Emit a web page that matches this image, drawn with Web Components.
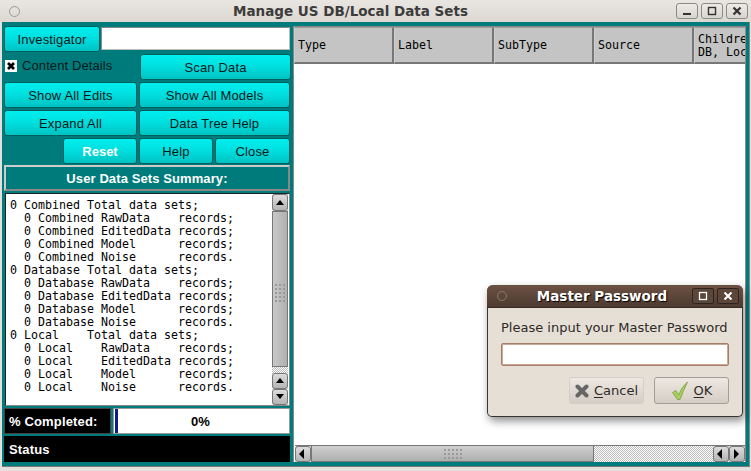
<!DOCTYPE html>
<html>
<head>
<meta charset="utf-8">
<title>Manage US DB/Local Data Sets</title>
<style>
html, body { margin: 0; padding: 0; width: 751px; height: 471px; overflow: hidden; background: #e4e0db; }
</style>
</head>
<body>
<us-main-window></us-main-window>
<script>
// square arrow button used by both scrollbars
class ArrowButton extends HTMLElement {
    constructor() {
        super();
        const dir = this.getAttribute('dir') || 'up';
        const pts = { up: '1,7 9,7 5,2', down: '1,2 9,2 5,7', left: '6,0 6,10 1,5', right: '2,0 2,10 7,5' }[dir];
        const shadow = this.attachShadow({ mode: 'open' });
        shadow.innerHTML = `
            <style>
                :host {
                    display: flex;
                    align-items: center;
                    justify-content: center;
                    box-sizing: border-box;
                    background: linear-gradient(#dcdcdc, #b4b4b4);
                    border: 1px solid #777;
                    border-radius: 3px;
                }
                svg { display: block; }
            </style>
            <svg width="10" height="10" viewBox="0 0 10 10"><polygon points="${pts}" fill="#000"/></svg>
        `;
    }
}
customElements.define('us-arrow', ArrowButton);

class TealButton extends HTMLElement {
    constructor() {
        super();
        const shadow = this.attachShadow({ mode: 'open' });
        shadow.innerHTML = `
            <style>
                :host {
                    display: flex;
                    align-items: center;
                    justify-content: center;
                    box-sizing: border-box;
                    height: 26px;
                    background: linear-gradient(#00eeee 0%, #00e0e0 45%, #00c2c2 100%);
                    border: 1px solid #005f5f;
                    border-radius: 3px;
                    font: 13px "Liberation Sans", sans-serif;
                    letter-spacing: 0.15px;
                    color: #04181a;
                }
                :host([light]) { color: #fff; font-weight: bold; letter-spacing: 0; }
            </style>
            <slot></slot>
        `;
    }
}
customElements.define('us-button', TealButton);

class SummaryBox extends HTMLElement {
    constructor() {
        super();
        const shadow = this.attachShadow({ mode: 'open' });
        shadow.innerHTML = `
            <style>
                :host {
                    display: flex;
                    box-sizing: border-box;
                    height: 213px;
                    flex: none;
                    background: #fff;
                    border: 1px solid #222;
                    border-right-color: #888;
                    border-bottom-color: #888;
                }
                pre {
                    flex: 1;
                    margin: 0;
                    padding: 5px 0 0 4px;
                    font: 11.63px/13px "DejaVu Sans Mono", monospace;
                    color: #000;
                }
                .bar {
                    width: 16px;
                    margin: 0 1px 0 0;
                    display: flex;
                    flex-direction: column;
                    background: repeating-conic-gradient(#bbb 0 25%, #fff 0 50%) 0 0 / 2px 2px;
                }
                us-arrow { height: 17px; }
                .thumb {
                    height: 156px;
                    box-sizing: border-box;
                    background: linear-gradient(90deg, #c8c8c8, #b0b0b0);
                    border: 1px solid #777;
                    display: flex;
                    align-items: center;
                    justify-content: center;
                }
                .grip { display: grid; grid-template-columns: repeat(3, 2px); gap: 2px 2px; margin-top: 8px; }
                .grip i { width: 2px; height: 2px; background: #999; }
                .gap { flex: 1; }
            </style>
            <pre>0 Combined Total data sets;
  0 Combined RawData    records;
  0 Combined EditedData records;
  0 Combined Model      records;
  0 Combined Noise      records.
0 Database Total data sets;
  0 Database RawData    records;
  0 Database EditedData records;
  0 Database Model      records;
  0 Database Noise      records.
0 Local    Total data sets;
  0 Local    RawData    records;
  0 Local    EditedData records;
  0 Local    Model      records;
  0 Local    Noise      records.</pre>
            <div class="bar">
                <us-arrow dir="up"></us-arrow>
                <div class="thumb"><div class="grip">${Array(15).fill('<i></i>').join('')}</div></div>
                <div class="gap"></div>
                <us-arrow dir="up" style="height:16px"></us-arrow>
                <us-arrow dir="down" style="height:16px"></us-arrow>
            </div>
        `;
    }
}
customElements.define('us-summary', SummaryBox);

class LeftPanel extends HTMLElement {
    constructor() {
        super();
        const shadow = this.attachShadow({ mode: 'open' });
        shadow.innerHTML = `
            <style>
                :host {
                    display: flex;
                    flex-direction: column;
                    width: 286px;
                    flex: none;
                }
                .rows { display: flex; flex-direction: column; gap: 2px; }
                .row { display: flex; gap: 2px; height: 26px; }
                .row > * { flex: none; }
                .l { width: 133px; }
                .r { width: 151px; margin-left: auto; }
                .s { width: 74px; }
                .first { gap: 1px; }
                .first us-button { width: 96px; }
                .first div {
                    flex: 1;
                    box-sizing: border-box;
                    height: 23px;
                    margin-top: 1px;
                    background: #fff;
                    border: 1px solid #bbb;
                    border-top-color: #888;
                    border-left-color: #888;
                }
                .check {
                    display: flex;
                    align-items: center;
                    gap: 5px;
                    padding: 0 0 3px 1px;
                    font: 13px "Liberation Sans", sans-serif;
                    letter-spacing: 0.1px;
                    color: #04181a;
                }
                .check svg { display: block; }
                .title {
                    box-sizing: border-box;
                    height: 26px;
                    flex: none;
                    margin-top: 1px;
                    display: flex;
                    align-items: center;
                    justify-content: center;
                    background: #007b7b;
                    border: 2px solid #ccc;
                    border-right-color: #888;
                    border-bottom-color: #888;
                    font: bold 13px "Liberation Sans", sans-serif;
                    letter-spacing: 0.1px;
                    color: #fff;
                }
                us-summary { margin-top: 2px; margin-left: 1px; }
                .progress { display: flex; height: 26px; flex: none; margin-top: 2px; }
                .label {
                    box-sizing: border-box;
                    display: flex;
                    align-items: center;
                    background: #000;
                    color: #fff;
                    font: bold 13px "Liberation Sans", sans-serif;
                    letter-spacing: 0.15px;
                    padding-left: 5px;
                }
                .progress .label { width: 107px; padding-left: 4px; border: 1px solid #444; }
                .meter {
                    flex: 1;
                    margin-left: 2px;
                    box-sizing: border-box;
                    background: #fff;
                    border: 1px solid #999;
                    display: flex;
                    align-items: center;
                    font: bold 13px "Liberation Sans", sans-serif;
                    color: #000;
                }
                .meter b { width: 3px; height: 24px; background: #101a8a; margin-left: 1px; }
                .meter span { flex: 1; text-align: center; padding-right: 6px; }
                .status { height: 26px; flex: none; margin-top: 2px; }
            </style>
            <div class="rows">
                <div class="row first"><us-button>Investigator</us-button><div></div></div>
                <div class="row">
                    <div class="check l">
                        <svg width="12" height="12" viewBox="0 0 12 12"><rect width="12" height="12" fill="#fff"/><path d="M3 3l6 6M9 3l-6 6" stroke="#000" stroke-width="2.8"/></svg>
                        Content Details
                    </div>
                    <us-button class="r">Scan Data</us-button>
                </div>
                <div class="row">
                    <us-button class="l">Show All Edits</us-button>
                    <us-button class="r">Show All Models</us-button>
                </div>
                <div class="row">
                    <us-button class="l">Expand All</us-button>
                    <us-button class="r">Data Tree Help</us-button>
                </div>
                <div class="row" style="justify-content:flex-end">
                    <us-button light class="s">Reset</us-button>
                    <us-button class="s">Help</us-button>
                    <us-button class="s" style="width:75px">Close</us-button>
                </div>
            </div>
            <div class="title">User Data Sets Summary:</div>
            <us-summary></us-summary>
            <div class="progress">
                <div class="label">% Completed:</div>
                <div class="meter"><b></b><span>0%</span></div>
            </div>
            <div class="label status">Status</div>
        `;
    }
}
customElements.define('us-left-panel', LeftPanel);

class DataTree extends HTMLElement {
    constructor() {
        super();
        const shadow = this.attachShadow({ mode: 'open' });
        shadow.innerHTML = `
            <style>
                :host {
                    display: flex;
                    flex-direction: column;
                    flex: 1;
                    box-sizing: border-box;
                    min-width: 0;
                    background: #fff;
                    border-left: 1px solid #888;
                    border-top: 1px solid #888;
                    border-right: 1px solid #888;
                }
                .head { display: flex; height: 37px; flex: none; overflow: hidden; background: #c4c4c4; }
                .head div {
                    box-sizing: border-box;
                    width: 100px;
                    flex: none;
                    display: flex;
                    align-items: center;
                    padding: 1px 0 0 3px;
                    border-style: solid;
                    border-color: #999 #777 #777 #ccc;
                    border-width: 1px 2px 2px 1px;
                    background: #c4c4c4;
                    font: 11.63px/13px "DejaVu Sans Mono", monospace;
                    color: #000;
                    white-space: pre;
                }
                .body { flex: 1; }
                .hbar {
                    display: flex;
                    height: 17px;
                    flex: none;
                    box-sizing: border-box;
                    margin: 0 0 0 1px;
                    background: repeating-conic-gradient(#bbb 0 25%, #fff 0 50%) 0 0 / 2px 2px;
                    border-top: 1px solid #777;
                }
                us-arrow { width: 16px; }
                .thumb {
                    width: 283px;
                    box-sizing: border-box;
                    background: linear-gradient(#d0d0d0, #aeaeae);
                    border: 1px solid #777;
                    border-top: 0;
                    display: flex;
                    align-items: center;
                    justify-content: center;
                }
                .grip { display: grid; grid-template-columns: repeat(5, 2px); gap: 2px 2px; }
                .grip i { width: 2px; height: 2px; background: #999; }
                .gap { flex: 1; }
            </style>
            <div class="head">
                <div>Type</div><div>Label</div><div>SubType</div><div>Source</div><div>Children
DB, Local</div>
            </div>
            <div class="body"></div>
            <div class="hbar">
                <us-arrow dir="left"></us-arrow>
                <div class="thumb"><div class="grip">${Array(15).fill('<i></i>').join('')}</div></div>
                <div class="gap"></div>
                <us-arrow dir="left"></us-arrow>
                <us-arrow dir="right"></us-arrow>
            </div>
        `;
    }
}
customElements.define('us-data-tree', DataTree);

class TitleBar extends HTMLElement {
    constructor() {
        super();
        const shadow = this.attachShadow({ mode: 'open' });
        shadow.innerHTML = `
            <style>
                :host {
                    display: flex;
                    align-items: center;
                    box-sizing: border-box;
                    height: 22px;
                    padding: 0 3px 0 9px;
                    background: linear-gradient(#e9e6e1, #dcd7d1);
                    font: bold 13.5px "DejaVu Sans", sans-serif;
                    color: #3c3c3c;
                    flex: none;
                }
                .dot { width: 9px; height: 9px; border: 1px solid #999; border-radius: 50%; }
                .text { flex: 1; text-align: center; padding-left: 5px; }
                .btns { display: flex; gap: 3px; }
                .btns div {
                    box-sizing: border-box;
                    width: 22px;
                    height: 16px;
                    border: 1px solid #8d8a86;
                    border-radius: 3px;
                    background: linear-gradient(#eeeae6, #d8d4cf);
                    display: flex;
                    align-items: center;
                    justify-content: center;
                }
                svg { display: block; }
            </style>
            <div class="dot"></div>
            <div class="text"><slot></slot></div>
            <div class="btns">
                <div><svg width="10" height="10"><rect x="1" y="7" width="8" height="2" fill="#333"/></svg></div>
                <div><svg width="10" height="10"><rect x="1.5" y="1.5" width="7" height="7" fill="none" stroke="#333" stroke-width="1.4"/></svg></div>
                <div><svg width="10" height="10"><path d="M1.5 1.5l7 7M8.5 1.5l-7 7" stroke="#333" stroke-width="2.2"/></svg></div>
            </div>
        `;
    }
}
customElements.define('us-title-bar', TitleBar);

class PasswordDialog extends HTMLElement {
    constructor() {
        super();
        const shadow = this.attachShadow({ mode: 'open' });
        shadow.innerHTML = `
            <style>
                :host {
                    position: absolute;
                    left: 487px;
                    top: 285px;
                    width: 256px;
                    height: 132px;
                    box-sizing: border-box;
                    display: flex;
                    flex-direction: column;
                    background: #e6dfd6;
                    border: 1px solid #3a3531;
                    border-top: 0;
                    border-radius: 6px 6px 5px 5px;
                    box-shadow: 2px 4px 8px rgba(0,0,0,.45);
                    font: 13px "DejaVu Sans", sans-serif;
                    color: #2e2a28;
                }
                .bar {
                    height: 23px;
                    flex: none;
                    margin: 0 -1px;
                    display: flex;
                    align-items: center;
                    padding: 0 4px 0 10px;
                    border-radius: 6px 6px 0 0;
                    background: linear-gradient(#6b5143, #4e3a30);
                    border-bottom: 1px solid #3a2b24;
                    box-sizing: border-box;
                    color: #fff;
                    font-weight: bold;
                    font-size: 13.5px;
                    text-shadow: 1px 1px 1px #000;
                }
                .dot { width: 8px; height: 8px; border: 1px solid #8c7a6e; border-radius: 50%; }
                .name { flex: 1; text-align: center; padding-left: 5px; }
                .wb { display: flex; gap: 3px; }
                .wb div {
                    box-sizing: border-box;
                    width: 22px;
                    height: 16px;
                    border: 1px solid #2f2320;
                    border-radius: 2px;
                    background: #5c4639;
                    display: flex;
                    align-items: center;
                    justify-content: center;
                }
                .content { flex: 1; display: flex; flex-direction: column; padding: 9px 13px 0 13px; }
                .msg { height: 20px; display: flex; align-items: center; white-space: nowrap; }
                .entry {
                    height: 23px;
                    margin-top: 6px;
                    box-sizing: border-box;
                    background: #fff;
                    border: 1px solid #a87c66;
                    box-shadow: inset 0 0 0 1px #c9a898;
                    border-radius: 2px;
                }
                .actions { display: flex; justify-content: flex-end; gap: 10px; margin-top: 11px; }
                .btn {
                    box-sizing: border-box;
                    width: 75px;
                    height: 27px;
                    display: flex;
                    align-items: center;
                    justify-content: center;
                    gap: 5px;
                    border: 1px solid #a59c93;
                    border-radius: 3px;
                    background: linear-gradient(#eee8e2, #d5cdc5);
                }
                .btn.cancel { border-color: #d6cec6; }
                u { text-underline-offset: 2px; }
                svg { display: block; }
            </style>
            <div class="bar">
                <div class="dot"></div>
                <div class="name">Master Password</div>
                <div class="wb">
                    <div><svg width="10" height="10"><rect x="1.5" y="1.5" width="7" height="7" fill="none" stroke="#fff" stroke-width="1.3"/></svg></div>
                    <div><svg width="10" height="10"><path d="M1.5 1.5l7 7M8.5 1.5l-7 7" stroke="#fff" stroke-width="2"/></svg></div>
                </div>
            </div>
            <div class="content">
                <div class="msg">Please input your Master Password</div>
                <div class="entry"></div>
                <div class="actions">
                    <div class="btn cancel">
                        <svg width="14" height="14" viewBox="0 0 14 14"><path d="M2.5 2.5l9 9M11.5 2.5l-9 9" stroke="#666" stroke-width="4" stroke-linecap="round"/></svg>
                        <span><u>C</u>ancel</span>
                    </div>
                    <div class="btn">
                        <svg width="18" height="20" viewBox="0 0 18 20"><path d="M1.5 11.5 L5 9.5 L7.5 14 Q10.5 6 16.5 1 Q12.5 9 9 18.5 L6.5 18.5 Z" fill="#a6d05a" stroke="#7c9b40" stroke-width=".8"/></svg>
                        <span><u>O</u>K</span>
                    </div>
                </div>
            </div>
        `;
    }
}
customElements.define('us-password-dialog', PasswordDialog);

class MainWindow extends HTMLElement {
    constructor() {
        super();
        const shadow = this.attachShadow({ mode: 'open' });
        shadow.innerHTML = `
            <style>
                :host {
                    display: flex;
                    flex-direction: column;
                    width: 751px;
                    height: 471px;
                    background: #e4e0db;
                }
                .frame {
                    display: flex;
                    gap: 3px;
                    box-sizing: border-box;
                    width: 748px;
                    height: 445px;
                    margin-left: 2px;
                    padding: 4px 3px 4px 2px;
                    background: #007b7b;
                    border-bottom: 1px solid #777;
                    border-right: 1px solid #888;
                }
            </style>
            <us-title-bar>Manage US DB/Local Data Sets</us-title-bar>
            <div class="frame">
                <us-left-panel></us-left-panel>
                <us-data-tree></us-data-tree>
            </div>
            <us-password-dialog></us-password-dialog>
        `;
    }
}
customElements.define('us-main-window', MainWindow);
</script>
</body>
</html>
